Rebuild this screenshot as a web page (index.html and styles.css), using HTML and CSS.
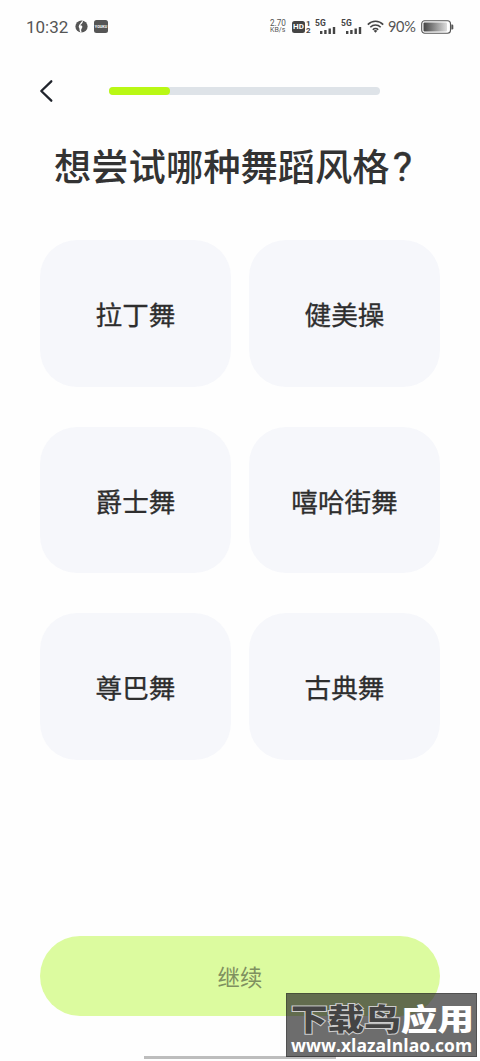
FILE: index.html
```html
<!DOCTYPE html>
<html lang="zh-CN">
<head>
    <meta charset="UTF-8">
    <meta name="viewport" content="width=device-width, initial-scale=1.0">
    <title>想尝试哪种舞蹈风格?</title>
    <link rel="stylesheet" href="styles.css">
</head>
<body>
    <div class="status-bar">
        <span class="time">10:32</span>
        <svg class="app-globe" width="13" height="13" viewBox="0 0 13 13">
            <circle cx="6.5" cy="6.5" r="6.1" fill="#555"/>
            <path d="M7.6 .5C8.6 2.4 6.8 3.8 5 5.2C6.8 5 8 6.2 7 8C6 9.4 5.8 10.4 6.8 12.5L5.4 12.4C4 10.6 5 9 4 7.6C3 6 5.4 3 7.6 .5Z" fill="#fff"/>
        </svg>
        <span class="app-youku">YOUKU</span>
        <div class="status-right">
            <div class="speed"><span>2.70</span><span>KB/s</span></div>
            <div class="hd"><span class="hd-box">HD</span><span class="hd-num"><b>1</b><b>2</b></span></div>
            <div class="signal">
                <span>5G</span>
                <svg width="16" height="8" viewBox="0 0 16 8"><path d="M0 5h2.4v3H0zM4.2 4h2.4v4H4.2zM8.5 2.5h2.4v5.5H8.5zM12.8 1h2.4v7h-2.4z" fill="#444"/></svg>
            </div>
            <div class="signal">
                <span>5G</span>
                <svg width="16" height="8" viewBox="0 0 16 8"><path d="M0 5h2.4v3H0zM4.2 4h2.4v4H4.2zM8.5 2.5h2.4v5.5H8.5zM12.8 1h2.4v7h-2.4z" fill="#444"/></svg>
            </div>
            <svg class="wifi" width="17" height="13" viewBox="0 0 17 13">
                <path d="M.8 4.6C5 .2 12 .2 16.2 4.6M3.3 7.3C6.3 4.3 10.7 4.3 13.7 7.3M5.8 9.7C7.3 8.2 9.7 8.2 11.2 9.7" fill="none" stroke="#444" stroke-width="1.6"/>
                <path d="M6.6 10.8Q8.5 9.4 10.4 10.8L8.5 12.8Z" fill="#444"/>
            </svg>
            <span class="percent">90%</span>
            <svg class="battery" width="33" height="14" viewBox="0 0 33 14">
                <defs>
                    <linearGradient id="charge"><stop offset="0" stop-color="#444"/><stop offset="1" stop-color="#ddd"/></linearGradient>
                </defs>
                <rect x=".7" y=".7" width="28.8" height="12.6" rx="3" fill="#fff" stroke="#555" stroke-width="1.1"/>
                <rect x="2.5" y="2.5" width="23.5" height="9" rx="1" fill="url(#charge)"/>
                <path d="M30.3 4.6h.8q1.2 0 1.2 1.2v2.4q0 1.2-1.2 1.2h-.8z" fill="#555"/>
            </svg>
        </div>
    </div>

    <header>
        <svg class="back" width="16" height="24" viewBox="0 0 16 24">
            <path d="M12.3 2.3L2.3 12L12.3 21.7" fill="none" stroke="#20242c" stroke-width="2.3" stroke-linecap="round" stroke-linejoin="round"/>
        </svg>
        <div class="progress"><div class="progress-fill"></div></div>
    </header>

    <h1>想尝试哪种舞蹈风格<span class="question">?</span></h1>

    <main class="options">
        <div class="option">拉丁舞</div>
        <div class="option">健美操</div>
        <div class="option">爵士舞</div>
        <div class="option">嘻哈街舞</div>
        <div class="option">尊巴舞</div>
        <div class="option">古典舞</div>
    </main>

    <button class="continue-btn">继续</button>
    <div class="home-bar"></div>

    <div class="watermark">
        <div class="mark-name"><span class="dark">下载鸟</span><span>应用</span></div>
        <div class="mark-url">www.xlazaInlao.com</div>
    </div>
</body>
</html>
```
FILE: styles.css
```css
* {
    box-sizing: border-box;
}

body {
    position: relative;
    display: flex;
    flex-direction: column;
    width: 480px;
    height: 1061px;
    margin: 0;
    overflow: hidden;
    background-color: #fefefe;
    color: #333;
    font-family: "Noto Sans CJK SC", sans-serif;
}

/* Status bar */
.status-bar {
    display: flex;
    align-items: center;
    height: 53px;
    padding: 0 26px;
    color: #555;
    font-family: Roboto, sans-serif;
}

.time {
    width: 42px;
    font-size: 17px;
    line-height: 20px;
    white-space: nowrap;
}

.app-globe {
    margin-left: 7px;
}

.app-youku {
    width: 14px;
    height: 13px;
    margin-left: 6px;
    border-radius: 2.5px;
    background-color: #555;
    color: #fff;
    font-size: 3.8px;
    font-weight: bold;
    line-height: 13px;
    text-align: center;
}

.status-right {
    display: flex;
    align-items: center;
    margin-left: auto;
}

.speed {
    display: flex;
    flex-direction: column;
    width: 17px;
    margin-right: 5px;
    font-size: 8.2px;
    line-height: 7px;
    white-space: nowrap;
}

.speed span + span {
    font-size: 7px;
}

.hd {
    display: flex;
    align-items: center;
    margin-right: 4px;
}

.hd-box {
    width: 13px;
    height: 12px;
    border-radius: 2.5px;
    background-color: #444;
    color: #fff;
    font-size: 8px;
    font-weight: bold;
    line-height: 12px;
    text-align: center;
}

.hd-num {
    display: flex;
    flex-direction: column;
    width: 6px;
    padding-left: 1px;
    color: #444;
    font-size: 8px;
    line-height: 7px;
}

.signal {
    display: flex;
    flex-direction: column;
    width: 21px;
    height: 14px;
    margin-right: 5px;
    color: #444;
    font-size: 8.5px;
    font-weight: bold;
    line-height: 7px;
}

.signal svg {
    margin: -1px 0 0 5px;
}

.wifi {
    margin-right: 4px;
}

.percent {
    width: 29px;
    font-family: Lato, sans-serif;
    font-size: 14.5px;
    line-height: 18px;
    letter-spacing: -0.3px;
}

.battery {
    margin-left: 4px;
}

/* Back arrow and progress */
header {
    display: flex;
    align-items: center;
    height: 76px;
    padding: 0 40px 0 39px;
}

.progress {
    width: 271px;
    height: 8px;
    margin-left: 54px;
    border-radius: 4px;
    background-color: #dee3e8;
}

.progress-fill {
    width: 61px;
    height: 8px;
    border-radius: 4px;
    background-color: #b9f814;
}

h1 {
    height: 54px;
    margin: 9px 0 0 54px;
    color: #333;
    font-size: 37.3px;
    font-weight: 500;
    line-height: 54px;
    white-space: nowrap;
}

.question {
    margin-left: 3px;
    font-family: Roboto, sans-serif;
    font-size: 41px;
    font-weight: 400;
    line-height: 40px;
    -webkit-text-stroke: 0.4px #333;
}

/* Dance styles */
.options {
    display: grid;
    grid-template-columns: 191px 191px;
    grid-auto-rows: 146.7px;
    gap: 40px 18px;
    margin: 48px 40px 0;
}

.option {
    display: flex;
    align-items: center;
    justify-content: center;
    border-radius: 37px;
    background-color: #f6f7fb;
    color: #2e2e2e;
    font-size: 26.6px;
    font-weight: 400;
    -webkit-text-stroke: 0.3px #2e2e2e;
}

.continue-btn {
    height: 80px;
    margin: 176px 40px 0;
    padding: 0;
    border: none;
    border-radius: 40px;
    background-color: #dcfb9f;
    color: #7f9060;
    font-family: inherit;
    font-size: 22.4px;
}

.home-bar {
    width: 192px;
    height: 3px;
    margin: 40px auto 0;
    background-color: #bdbdbd;
}

/* Site mark over the bottom corner */
.watermark {
    position: absolute;
    left: 286px;
    top: 993px;
    width: 191px;
    height: 64px;
    padding: 8px 3px 0 4px;
    border: 1px solid rgba(0, 0, 0, 0.25);
    background-color: rgba(40, 40, 40, 0.68);
    color: #fff;
    white-space: nowrap;
}

.mark-name {
    width: 150px;
    height: 32px;
    font-size: 30px;
    font-weight: 900;
    line-height: 30px;
    transform: scaleX(1.22);
    transform-origin: left;
}

.mark-name .dark {
    color: #444;
    -webkit-text-stroke: 2px #ccc;
    paint-order: stroke fill;
}

.mark-url {
    font-family: "Open Sans", sans-serif;
    font-size: 17.5px;
    font-weight: bold;
    line-height: 22px;
}
```
